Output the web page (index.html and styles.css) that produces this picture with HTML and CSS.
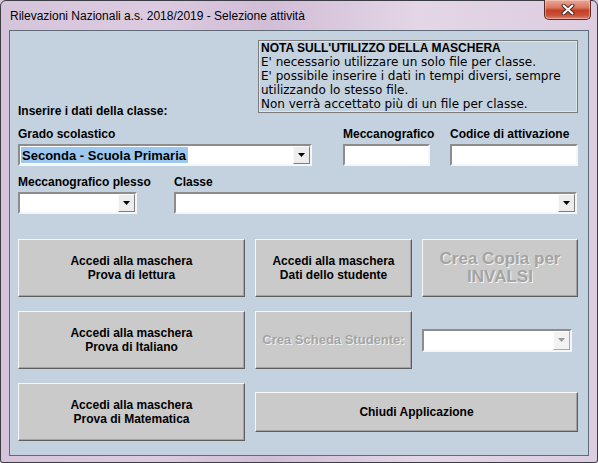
FILE: index.html
```html
<!DOCTYPE html>
<html lang="it">
<head>
<meta charset="utf-8">
<title>Selezione attività</title>
<link rel="stylesheet" href="styles.css">
</head>
<body>
<div class="window">
  <div class="titlebar">
    <span class="title">Rilevazioni Nazionali a.s. 2018/2019 - Selezione attività</span>
    <div class="close">
      <svg width="14" height="11" viewBox="0 0 14 11">
        <path d="M2.5 1.5 L11.5 9.5 M11.5 1.5 L2.5 9.5" stroke="#4a2a26" stroke-width="4" stroke-linecap="round"/>
        <path d="M2.5 1.5 L11.5 9.5 M11.5 1.5 L2.5 9.5" stroke="#ffffff" stroke-width="2" stroke-linecap="round"/>
      </svg>
    </div>
  </div>
  <div class="client">
    <div class="top">
      <div class="intro label">Inserire i dati della classe:</div>
      <div class="note">
        <div class="note-title">NOTA SULL'UTILIZZO DELLA MASCHERA</div>
        <div>E' necessario utilizzare un solo file per classe.</div>
        <div>E' possibile inserire i dati in tempi diversi, sempre</div>
        <div>utilizzando lo stesso file.</div>
        <div>Non verrà accettato più di un file per classe.</div>
      </div>
    </div>

    <div class="fields row1">
      <div class="field w-grado">
        <div class="label">Grado scolastico</div>
        <div class="combo">
          <span class="value"><span class="sel">Seconda - Scuola Primaria</span></span>
          <span class="drop"><svg width="7" height="4" viewBox="0 0 7 4"><polygon points="0,0 7,0 3.5,4" fill="#000"/></svg></span>
        </div>
      </div>
      <div class="field w-mecc">
        <div class="label">Meccanografico</div>
        <div class="textbox"></div>
      </div>
      <div class="field w-cod">
        <div class="label">Codice di attivazione</div>
        <div class="textbox"></div>
      </div>
    </div>

    <div class="fields row2">
      <div class="field w-plesso">
        <div class="label">Meccanografico plesso</div>
        <div class="combo">
          <span class="value"></span>
          <span class="drop"><svg width="7" height="4" viewBox="0 0 7 4"><polygon points="0,0 7,0 3.5,4" fill="#000"/></svg></span>
        </div>
      </div>
      <div class="field w-classe">
        <div class="label">Classe</div>
        <div class="combo">
          <span class="value"></span>
          <span class="drop"><svg width="7" height="4" viewBox="0 0 7 4"><polygon points="0,0 7,0 3.5,4" fill="#000"/></svg></span>
        </div>
      </div>
    </div>

    <div class="buttons">
      <div class="btn">Accedi alla maschera<br>Prova di lettura</div>
      <div class="btn">Accedi alla maschera<br>Dati dello studente</div>
      <div class="btn disabled big">Crea Copia per<br>INVALSI</div>

      <div class="btn">Accedi alla maschera<br>Prova di Italiano</div>
      <div class="btn disabled mid">Crea Scheda Studente:</div>
      <div class="combo small disabled-combo">
        <span class="value"></span>
        <span class="drop"><svg width="7" height="4" viewBox="0 0 7 4"><polygon points="0,0 7,0 3.5,4" fill="#9a9a9a"/></svg></span>
      </div>

      <div class="btn">Accedi alla maschera<br>Prova di Matematica</div>
      <div class="btn wide">Chiudi Applicazione</div>
    </div>
  </div>
</div>
</body>
</html>
```

FILE: styles.css
```css
* { box-sizing: border-box; }

html, body {
  margin: 0;
  padding: 0;
  width: 598px;
  height: 463px;
  overflow: hidden;
  background: #d8c8dc;
}

body {
  font-family: "Liberation Sans", Arial, sans-serif;
  font-size: 12px;
  color: #000;
}

.window {
  width: 598px;
  height: 463px;
  border: 1px solid #3c3c44;
  border-radius: 6px 6px 3px 3px;
  background: linear-gradient(90deg, #d6c4da 0%, #dccbe0 25%, #d2bdd7 45%, #e3d6e6 70%, #dccde0 100%);
  display: flex;
  flex-direction: column;
}

.titlebar {
  height: 29px;
  display: flex;
  align-items: flex-start;
  justify-content: space-between;
  padding-left: 9px;
  padding-right: 6px;
}

.title {
  font-family: "Liberation Sans", Arial, sans-serif;
  font-size: 12px;
  line-height: 14px;
  margin-top: 8px;
  color: #000;
}

.close {
  width: 47px;
  height: 20px;
  margin-top: -1px;
  border: 1px solid #5a2a24;
  border-top: none;
  border-radius: 0 0 5px 5px;
  background: linear-gradient(180deg, #e9a89a 0%, #d9775f 40%, #c23f24 55%, #c9503a 80%, #dd8570 100%);
  box-shadow: inset 0 0 0 1px rgba(255, 220, 210, 0.45);
  display: flex;
  align-items: center;
  justify-content: center;
}

.close svg { display: block; }

.client {
  margin: 0 8px;
  height: 426px;
  border: 1px solid #5f6b78;
  background: #c4d2df;
  padding: 9px 10px 0 8px;
}

.top {
  display: flex;
  height: 87px;
  align-items: flex-start;
}

.label {
  font-weight: bold;
  font-size: 12px;
  line-height: 14px;
  height: 14px;
  white-space: nowrap;
}

.intro {
  align-self: flex-end;
  margin-bottom: 9px;
  flex: 1;
}

.note {
  width: 320px;
  height: 73px;
  border: 1px solid #7c7c7c;
  box-shadow: inset 0 0 0 1px #dfe5eb;
  padding: 0 2px;
  font-family: "DejaVu Sans", Verdana, sans-serif;
  font-size: 12px;
  line-height: 14px;
  white-space: nowrap;
}

.note-title {
  font-family: "Liberation Sans", Arial, sans-serif;
  font-weight: bold;
  font-size: 12px;
}

.fields {
  display: flex;
}

.row2 { margin-top: 9px; }

.field .label { margin-bottom: 3px; }

.w-grado { width: 294px; }
.w-mecc { width: 87px; margin-left: 31px; }
.w-cod { width: 128px; margin-left: 20px; }
.w-plesso { width: 119px; }
.w-classe { width: 403px; margin-left: 37px; }

.textbox,
.combo {
  height: 22px;
  background: #fff;
  border: 2px solid;
  border-color: #8d8d8d #f4f6f8 #f4f6f8 #8d8d8d;
}

.combo {
  display: flex;
  align-items: stretch;
}

.combo .value {
  flex: 1;
  padding: 1px;
  display: flex;
}

.sel {
  background: #9cc8f0;
  font-weight: bold;
  font-size: 13px;
  line-height: 17px;
  padding: 0 2px 0 1px;
}

.drop {
  width: 17px;
  background: #ededed;
  border: 1px solid;
  border-color: #fafafa #7d7d7d #7d7d7d #fafafa;
  display: flex;
  align-items: center;
  justify-content: center;
}

.drop svg { display: block; }

.buttons {
  margin-top: 25px;
  display: grid;
  grid-template-columns: 227px 157px 156px;
  grid-template-rows: 58px 58px 58px;
  column-gap: 10px;
  row-gap: 14px;
}

.btn {
  background: #cacaca;
  border: 1px solid;
  border-color: #f7f7f7 #5e5e5e #5e5e5e #f7f7f7;
  box-shadow: inset -1px -1px 0 #a3a3a3;
  display: flex;
  align-items: center;
  justify-content: center;
  text-align: center;
  font-weight: bold;
  font-size: 12px;
  line-height: 14px;
}

.btn.disabled {
  color: #a4a4a4;
  text-shadow: 1px 1px 0 #f2f2f2;
}

.btn.big {
  font-size: 17px;
  line-height: 18px;
}

.btn.mid {
  font-size: 13px;
}

.btn.wide {
  grid-column: 2 / 4;
  height: 40px;
  align-self: center;
}

.combo.small {
  width: 150px;
  height: 23px;
  align-self: center;
  justify-self: start;
}

.disabled-combo .drop {
  background: #f2f2f2;
  border-color: #fdfdfd #a9a9a9 #a9a9a9 #fdfdfd;
}
```
